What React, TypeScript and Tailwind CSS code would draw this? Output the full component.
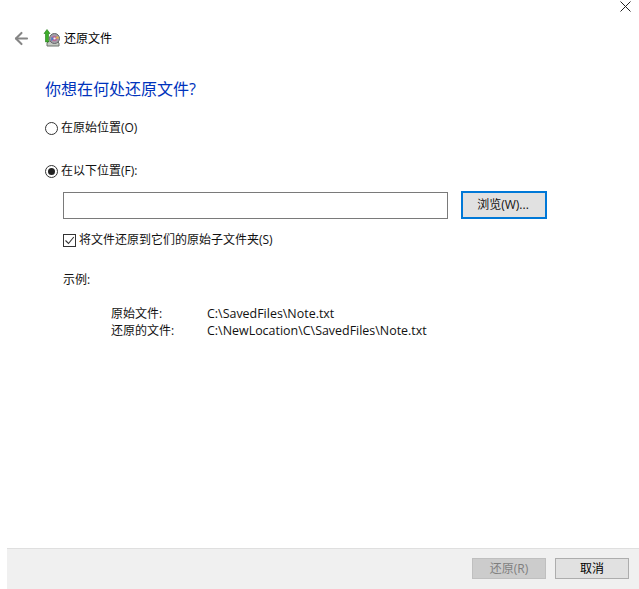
import { ArrowLeft } from "lucide-react";

const font = "font-['Open_Sans','Noto_Sans_CJK_SC',sans-serif]";

const RestoreIcon = () => (
  <svg width="18" height="18" viewBox="0 0 18 18">
    <path d="M4 17 L4 14 L6 12 L14 12 L16 14 L16 17 Z" fill="#c4c8c1" stroke="#6d736c" strokeWidth="1" />
    <circle cx="11.5" cy="9.5" r="5" fill="#a3a1a8" stroke="#66666b" strokeWidth="1" />
    <circle cx="11.5" cy="9.5" r="2.8" fill="#b86a98" />
    <path d="M11.5 9.5 L15 7 L16 9.5 Z" fill="#e4b64a" />
    <path d="M11.5 9.5 L8 12 L8.5 8 Z" fill="#4a79c9" />
    <circle cx="11.5" cy="9.5" r="1.1" fill="#f1f1f1" />
    <path d="M4 0.5 L7 4.5 L5.5 4.5 L5.5 13 L2.5 13 L2.5 4.5 L1 4.5 Z" fill="#3fae2a" stroke="#1f7a18" strokeWidth="0.6" />
  </svg>
);

const Radio = ({ checked }: { checked?: boolean }) => (
  <span className="flex h-[13px] w-[13px] shrink-0 items-center justify-center rounded-full border border-[#333333] bg-white">
    {checked ? <span className="h-[7px] w-[7px] rounded-full bg-[#222222]" /> : null}
  </span>
);

const Checkbox = () => (
  <span className="flex h-[13px] w-[13px] shrink-0 items-center justify-center border border-[#333333] bg-white">
    <svg width="11" height="11" viewBox="0 0 11 11">
      <path d="M1.5 5.5 L4.5 8.5 L9.8 2" fill="none" stroke="#333333" strokeWidth="1.1" />
    </svg>
  </span>
);

export default function App() {
  return (
    <div className={`relative flex h-[589px] w-[639px] flex-col overflow-hidden bg-white text-[12px] leading-[16px] text-[#111111] ${font}`}>
      {/* close button */}
      <svg className="absolute right-[8px] top-[1px]" width="11" height="11" viewBox="0 0 11 11">
        <path d="M0.5 0.5 L10.5 10.5 M10.5 0.5 L0.5 10.5" stroke="#222222" strokeWidth="1" />
      </svg>

      <div className="flex-1 pt-[29px]">
        <div className="flex h-[18px] items-center pl-[12px]">
          <ArrowLeft size={19} strokeWidth={2.6} className="text-[#858585]" />
          <span className="ml-[12px]"><RestoreIcon /></span>
          <span className="ml-[3px] pt-[2px] text-black">还原文件</span>
        </div>

        <h1 className="ml-[45px] mt-[31px] text-[16px] leading-[22px] font-normal text-[#0033bc]">你想在何处还原文件?</h1>

        <div className="ml-[45px] mt-[20px] flex h-[16px] items-center gap-[3px]">
          <Radio />
          <span>在原始位置(O)</span>
        </div>

        <div className="ml-[45px] mt-[27px] flex h-[16px] items-center gap-[3px]">
          <Radio checked />
          <span>在以下位置(F):</span>
        </div>

        <div className="ml-[63px] mt-[12px] flex items-center gap-[13px]">
          <div className="h-[27px] w-[385px] border border-[#7a7a7a] bg-white" />
          <button className="h-[28px] w-[86px] border-2 border-[#0078d7] bg-[#e1e1e1] pr-[2px] text-center">浏览(W)...</button>
        </div>

        <div className="ml-[63px] mt-[13px] flex h-[16px] items-center gap-[3px]">
          <Checkbox />
          <span>将文件还原到它们的原始子文件夹(S)</span>
        </div>

        <p className="ml-[63px] mt-[24px]">示例:</p>

        <div className="ml-[111px] mt-[17px] grid grid-cols-[96px_1fr] leading-[17px]">
          <span>原始文件:</span>
          <span className="text-[12.45px]">C:\SavedFiles\Note.txt</span>
          <span>还原的文件:</span>
          <span className="text-[12.45px]">C:\NewLocation\C\SavedFiles\Note.txt</span>
        </div>
      </div>

      <div className="ml-[7px] flex h-[41px] items-start justify-end gap-[9px] border-t border-[#dfdfdf] bg-[#f0f0f0] pr-[10px] pt-[9px]">
        <button className="h-[21px] w-[74px] border border-[#bfbfbf] bg-[#cccccc] text-center text-[#7f7f7f]">还原(R)</button>
        <button className="h-[21px] w-[74px] border border-[#adadad] bg-[#e1e1e1] text-center text-black">取消</button>
      </div>
    </div>
  );
}
